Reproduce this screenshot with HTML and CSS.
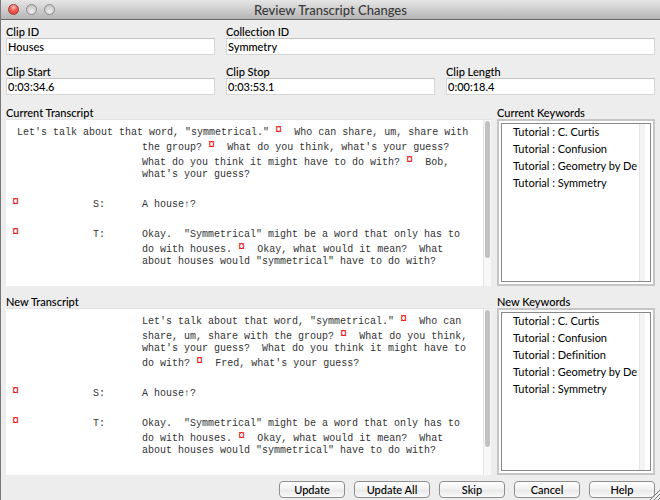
FILE: index.html
```
<!DOCTYPE html>
<html lang="en">
<head>
<meta charset="utf-8">
<title>Review Transcript Changes</title>
<link rel="stylesheet" href="styles.css">
</head>
<body>
<main class="window">
  <header class="titlebar">
    <div class="lights">
      <button class="light close" aria-label="Close"></button>
      <button class="light" aria-label="Minimize"></button>
      <button class="light" aria-label="Zoom"></button>
    </div>
    <h1 class="title">Review Transcript Changes</h1>
  </header>
  <form class="content">
    <div class="fields">
      <div class="field"><label for="clip-id">Clip ID</label><input id="clip-id" type="text" value="Houses"></div>
      <div class="field wide"><label for="collection-id">Collection ID</label><input id="collection-id" type="text" value="Symmetry"></div>
      <div class="field"><label for="clip-start">Clip Start</label><input id="clip-start" type="text" value="0:03:34.6"></div>
      <div class="field"><label for="clip-stop">Clip Stop</label><input id="clip-stop" type="text" value="0:03:53.1"></div>
      <div class="field"><label for="clip-length">Clip Length</label><input id="clip-length" type="text" value="0:00:18.4"></div>
    </div>

    <div class="compare">
      <section class="group">
        <h2 class="heading">Current Transcript</h2>
        <div class="transcript">
          <div class="script">
            <p class="hanging">Let's talk about that word, "symmetrical." <span class="mark">¤</span>  Who can share, um, share with<br>the group? <span class="mark">¤</span>  What do you think, what's your guess?<br>What do you think it might have to do with? <span class="mark">¤</span>  Bob,<br>what's your guess?</p>
            <div class="turn"><p><span class="mark">¤</span></p><p>S:</p><p>A house↑?</p></div>
            <div class="turn"><p><span class="mark">¤</span></p><p>T:</p><p>Okay.  "Symmetrical" might be a word that only has to<br>do with houses. <span class="mark">¤</span>  Okay, what would it mean?  What<br>about houses would "symmetrical" have to do with?</p></div>
          </div>
          <div class="track"><div class="thumb"></div></div>
        </div>
      </section>
      <section class="group">
        <label class="heading" for="current-keywords">Current Keywords</label>
        <div class="listframe">
          <select id="current-keywords" size="9">
            <option>Tutorial : C. Curtis</option>
            <option>Tutorial : Confusion</option>
            <option>Tutorial : Geometry by De</option>
            <option>Tutorial : Symmetry</option>
          </select>
          <div class="listtrack"></div>
        </div>
      </section>
      <section class="group">
        <h2 class="heading">New Transcript</h2>
        <div class="transcript">
          <div class="script">
            <p class="indented">Let's talk about that word, "symmetrical." <span class="mark">¤</span>  Who can<br>share, um, share with the group? <span class="mark">¤</span>  What do you think,<br>what's your guess?  What do you think it might have to<br>do with? <span class="mark">¤</span>  Fred, what's your guess?</p>
            <div class="turn"><p><span class="mark">¤</span></p><p>S:</p><p>A house↑?</p></div>
            <div class="turn"><p><span class="mark">¤</span></p><p>T:</p><p>Okay.  "Symmetrical" might be a word that only has to<br>do with houses. <span class="mark">¤</span>  Okay, what would it mean?  What<br>about houses would "symmetrical" have to do with?</p></div>
          </div>
          <div class="track"><div class="thumb"></div></div>
        </div>
      </section>
      <section class="group">
        <label class="heading" for="new-keywords">New Keywords</label>
        <div class="listframe">
          <select id="new-keywords" size="9">
            <option>Tutorial : C. Curtis</option>
            <option>Tutorial : Confusion</option>
            <option>Tutorial : Definition</option>
            <option>Tutorial : Geometry by De</option>
            <option>Tutorial : Symmetry</option>
          </select>
          <div class="listtrack"></div>
        </div>
      </section>
    </div>

    <div class="actions">
      <button type="button">Update</button>
      <button type="button" class="broad">Update All</button>
      <button type="button">Skip</button>
      <button type="button">Cancel</button>
      <button type="button">Help</button>
    </div>
  </form>
  <svg class="grip" width="10" height="10" viewBox="0 0 10 10" aria-hidden="true"><path d="M0 10L10 0M4 10L10 4M8 10L10 8" stroke="#808080" fill="none"/></svg>
</main>
</body>
</html>
```
FILE: styles.css
```
* { box-sizing: border-box; }

body {
  margin: 0;
  background: #ededed;
  color: #000;
  font: 500 11px/14px "Lato", "Open Sans", sans-serif;
  font-variant-ligatures: none;
}

p, h1, h2 { margin: 0; font: inherit; }

button, input, select { font: inherit; font-variant-ligatures: none; color: inherit; margin: 0; }

.window {
  position: relative;
  display: flex;
  flex-direction: column;
  min-height: 100vh;
  border-left: 1px solid #777;
}

.titlebar {
  display: grid;
  grid-template-columns: 1fr auto 1fr;
  align-items: center;
  height: 20px;
  padding: 0 7px;
  background: linear-gradient(#e6e6e6, #b5b5b5);
  border-bottom: 1px solid #686868;
}

.lights { display: flex; gap: 7px; }

.light {
  width: 11px;
  height: 11px;
  padding: 0;
  border: 1px solid #8b8b8b;
  border-radius: 50%;
  background: radial-gradient(circle at 50% 75%, #eee, #bbb);
}

.light.close {
  border-color: #9c3c36;
  background: radial-gradient(circle at 50% 25%, #ffc8c0 0, #f05a50 45%, #e0443c 100%);
}

.title { color: #3a3a3a; font-size: 13px; line-height: 18px; }

.content {
  flex: 1;
  display: flex;
  flex-direction: column;
  padding: 5px 5px 2px;
}

.fields {
  display: grid;
  grid-template-columns: repeat(3, 1fr);
  gap: 10px 11px;
}

.field { display: flex; flex-direction: column; line-height: 13px; }
.field.wide { grid-column: span 2; }

.field input {
  width: 100%;
  height: 17px;
  padding: 0 1px 1px;
  border: 1px solid #d6d6d6;
  border-top-color: #c4c4c4;
  border-radius: 0;
  background: #fff;
  outline: none;
}

.compare {
  flex: 1;
  display: grid;
  grid-template-columns: 1fr 158px;
  grid-auto-rows: 1fr;
  gap: 10px 6px;
  margin-top: 12px;
}

.group { display: flex; flex-direction: column; min-width: 0; }
.heading { display: block; line-height: 12px; }

.transcript {
  flex: 1;
  display: grid;
  grid-template-columns: 1fr 8px;
  background: #fff;
  border-top: 1px solid #e4e4e4;
}

.script {
  display: flex;
  flex-direction: column;
  gap: 15px;
  padding: 4px 6px;
  overflow: hidden;
  font: 10px/12px "Liberation Mono", monospace;
  color: #333;
  white-space: pre;
}

.hanging { padding-left: 130px; text-indent: -125px; }
.indented { padding-left: 130px; }

.turn {
  display: grid;
  grid-template-columns: 81px 49px 1fr;
  align-items: baseline;
}

.mark {
  color: #f00000;
  font-size: 12px;
  line-height: 13px;
  vertical-align: 2px;
}

.track {
  border-left: 1px solid #e4e4e4;
  background: #f8f8f8;
  padding: 1px 1px 0;
}

.thumb { height: 83%; border-radius: 3px; background: #c1c1c1; }

.listframe {
  flex: 1;
  display: grid;
  grid-template-columns: 1fr 6px 5px;
  border: 2px solid #c6c6c6;
  background: #fff;
  outline: 1px solid #888;
  outline-offset: -5px;
  padding: 3px;
}

.listframe select {
  width: 100%;
  height: 100%;
  appearance: none;
  overflow: hidden;
  border: 0;
  padding: 0;
  background: #fff;
  outline: none;
}

.listframe option {
  min-height: 17px;
  padding: 1px 0 2px 11px;
  line-height: 14px;
}

.listtrack { background: #f4f4f4; border-left: 1px solid #e6e6e6; }

.actions {
  display: flex;
  justify-content: flex-end;
  gap: 9px;
  margin-top: 6px;
}

.actions button {
  width: 66px;
  height: 17px;
  padding: 0;
  border: 1px solid #8f8f8f;
  border-radius: 4px;
  background: linear-gradient(#fff, #f0f0f0 50%, #e8e8e8 51%, #fafafa);
  line-height: 14px;
}

.actions .broad { width: 76px; }

.grip { position: absolute; right: 0; bottom: 0; }
```
